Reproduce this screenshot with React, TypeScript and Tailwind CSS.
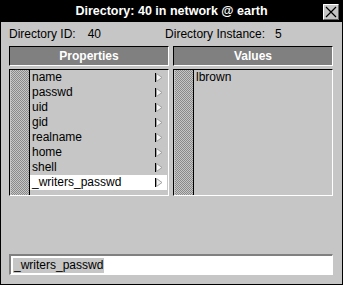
const properties = [
  "name",
  "passwd",
  "uid",
  "gid",
  "realname",
  "home",
  "shell",
  "_writers_passwd",
];

const values = ["lbrown"];

const selected = "_writers_passwd";

function Arrow() {
  return (
    <svg width="8" height="9" viewBox="0 0 8 9" className="shrink-0">
      <polygon points="1.5,0.5 7,4.5 1.5,8.5" fill="#f4f4f4" stroke="#a0a0a0" strokeWidth="1" />
      <line x1="0.5" y1="0" x2="0.5" y2="9" stroke="#000000" strokeWidth="1" />
    </svg>
  );
}

function CloseButton() {
  return (
    <svg width="16" height="16" viewBox="0 0 16 16" className="absolute right-[3px] top-[3px]">
      <rect x="0" y="0" width="16" height="16" fill="#c6c6c6" />
      <path d="M0.5 15.5 V0.5 H15.5" fill="none" stroke="#ffffff" />
      <path d="M15.5 0.5 V15.5 H0.5" fill="none" stroke="#606060" />
      <path d="M3 3 L13 13 M13 3 L3 13" stroke="#000000" strokeWidth="1.2" />
    </svg>
  );
}

function Header({ title }: { title: string }) {
  return (
    <div className="w-[160px] h-[20px] bg-[#808080] border-t border-l border-black border-r border-b border-r-white border-b-white flex items-center justify-center text-white font-bold text-[12px]">
      {title}
    </div>
  );
}

function List({ items, arrows }: { items: string[]; arrows?: boolean }) {
  return (
    <div className="w-[160px] h-[127px] flex border-t border-l border-black border-r border-b border-r-white border-b-white pl-px">
      <div className="w-[18px] bg-[image:repeating-conic-gradient(#8a8a8a_0%_25%,#c6c6c6_0%_50%)] bg-[length:2px_2px]" />
      <div className="w-px bg-black" />
      <div className="flex-1 flex flex-col pr-px">
        {items.map((item) => (
          <div
            key={item}
            className={`h-[15px] flex items-center justify-between pl-[2px] pr-[4px] text-[12px] leading-[15px] text-black ${
              arrows && item === selected ? "bg-white" : ""
            }`}
          >
            <span>{item}</span>
            {arrows && <Arrow />}
          </div>
        ))}
      </div>
    </div>
  );
}

export default function App() {
  return (
    <div className="w-[343px] h-[285px] bg-[#c6c6c6] border border-black flex flex-col font-['Liberation_Sans',Arial,sans-serif] text-black">
      <div className="relative h-[21px] bg-black flex items-center justify-center">
        <span className="text-white font-bold text-[12.5px] leading-none">
          Directory: 40 in network @ earth
        </span>
        <CloseButton />
      </div>

      <div className="flex flex-col pl-[8px] pt-[5px]">
        <div className="h-[14px] flex items-center text-[12px] leading-[14px]">
          <span>Directory ID:</span>
          <span className="ml-[12px]">40</span>
          <span className="ml-[64px]">Directory Instance:</span>
          <span className="ml-[10px]">5</span>
        </div>

        <div className="mt-[5px] flex gap-[4px]">
          <Header title="Properties" />
          <Header title="Values" />
        </div>

        <div className="mt-[3px] flex gap-[4px]">
          <List items={properties} arrows />
          <List items={values} />
        </div>

        <div className="mt-[58px] w-[324px] h-[21px] bg-white border-t-2 border-l-2 border-[#808080] border-r border-b border-r-white border-b-white flex items-center pl-[2px]">
          <span className="bg-[#c6c6c6] text-[12px] leading-[15px] pl-px pr-px">
            _writers_passwd
          </span>
        </div>
      </div>
    </div>
  );
}
